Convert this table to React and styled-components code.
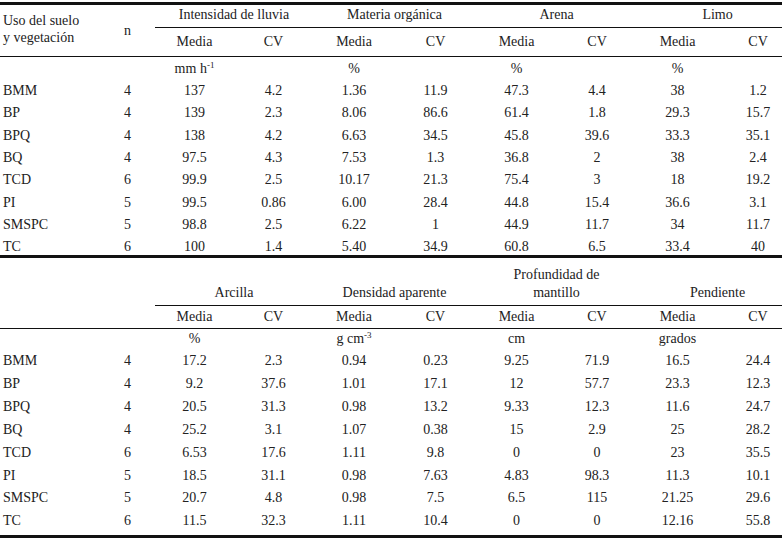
import React from 'react'
import styled, { createGlobalStyle } from 'styled-components'

const GlobalStyle = createGlobalStyle`
  html, body {
    margin: 0;
    padding: 0;
    background: #fff;
  }
  body {
    font-family: "Liberation Serif", "Times New Roman", serif;
    color: #222;
  }
`;

const Sheet = styled.div`
  width: 782px;
  padding-top: 2px;
  font-size: 14px;
`;

const Table = styled.table`
  width: 782px;
  table-layout: fixed;
  border-collapse: collapse;
  border-top: ${p => (p.$first ? '3px solid #111' : 'none')};
  border-bottom: 3px solid #111;
`;

const Col = styled.col`
  width: ${p => p.$w}px;
`;

const HeadRow = styled.tr`
  height: ${p => p.$h}px;
  border-bottom: 1px solid #111;

  &:first-child {
    border-bottom: none;
  }
`;

const Th = styled.th`
  font-weight: normal;
  padding: 0;
  line-height: 16px;
`;

const LabelHead = styled(Th)`
  text-align: left;
  vertical-align: middle;
  padding: 0 0 4px 3px;
  line-height: 17px;
`;

const NHead = styled(Th)`
  text-align: center;
  vertical-align: middle;
`;

const GroupHead = styled(Th)`
  text-align: center;
  vertical-align: bottom;
  line-height: 18px;
  padding: 0 0 3px ${p => (p.$last ? '16px' : '0')};
  border-bottom: 1px solid #111;
`;

const SubHead = styled(Th)`
  text-align: center;
  vertical-align: middle;
  padding-left: ${p => (p.$last ? '16px' : '0')};
`;

const Sup = styled.sup`
  font-size: 9px;
  line-height: 0;
  vertical-align: 5px;
`;

const BodyRow = styled.tr`
  height: ${p => p.$h}px;
`;

const Cell = styled.td`
  padding: ${p => p.$pt}px 0 0 ${p => (p.$label ? '3px' : p.$last ? '16px' : '0')};
  line-height: 16px;
  vertical-align: top;
  text-align: ${p => (p.$label ? 'left' : 'center')};
  white-space: nowrap;
`;

const widths = [100, 55, 79, 79, 82, 81, 81, 80, 81, 64];

const top = {
  groups: ['Intensidad de lluvia', 'Materia orgánica', 'Arena', 'Limo'],
  units: [<>mm h<Sup>-1</Sup></>, '%', '%', '%'],
  rows: [
    ['BMM', '4', '137', '4.2', '1.36', '11.9', '47.3', '4.4', '38', '1.2'],
    ['BP', '4', '139', '2.3', '8.06', '86.6', '61.4', '1.8', '29.3', '15.7'],
    ['BPQ', '4', '138', '4.2', '6.63', '34.5', '45.8', '39.6', '33.3', '35.1'],
    ['BQ', '4', '97.5', '4.3', '7.53', '1.3', '36.8', '2', '38', '2.4'],
    ['TCD', '6', '99.9', '2.5', '10.17', '21.3', '75.4', '3', '18', '19.2'],
    ['PI', '5', '99.5', '0.86', '6.00', '28.4', '44.8', '15.4', '36.6', '3.1'],
    ['SMSPC', '5', '98.8', '2.5', '6.22', '1', '44.9', '11.7', '34', '11.7'],
    ['TC', '6', '100', '1.4', '5.40', '34.9', '60.8', '6.5', '33.4', '40'],
  ],
};

const bottom = {
  groups: ['Arcilla', 'Densidad aparente', <>Profundidad de<br />mantillo</>, 'Pendiente'],
  units: ['%', <>g cm<Sup>-3</Sup></>, 'cm', 'grados'],
  rows: [
    ['BMM', '4', '17.2', '2.3', '0.94', '0.23', '9.25', '71.9', '16.5', '24.4'],
    ['BP', '4', '9.2', '37.6', '1.01', '17.1', '12', '57.7', '23.3', '12.3'],
    ['BPQ', '4', '20.5', '31.3', '0.98', '13.2', '9.33', '12.3', '11.6', '24.7'],
    ['BQ', '4', '25.2', '3.1', '1.07', '0.38', '15', '2.9', '25', '28.2'],
    ['TCD', '6', '6.53', '17.6', '1.11', '9.8', '0', '0', '23', '35.5'],
    ['PI', '5', '18.5', '31.1', '0.98', '7.63', '4.83', '98.3', '11.3', '10.1'],
    ['SMSPC', '5', '20.7', '4.8', '0.98', '7.5', '6.5', '115', '21.25', '29.6'],
    ['TC', '6', '11.5', '32.3', '1.11', '10.4', '0', '0', '12.16', '55.8'],
  ],
};

function DataTable({ data, label, first, h1, h2, rowH, lastH, pt }) {
  return (
    <Table $first={first}>
      <colgroup>
        {widths.map((w, i) => <Col key={i} $w={w} />)}
      </colgroup>
      <thead>
        <HeadRow $h={h1}>
          <LabelHead rowSpan={2}>{label}</LabelHead>
          <NHead rowSpan={2}>{label ? 'n' : ''}</NHead>
          {data.groups.map((g, i) => (
            <GroupHead key={i} colSpan={2} $last={i === 3}>{g}</GroupHead>
          ))}
        </HeadRow>
        <HeadRow $h={h2}>
          {data.groups.map((g, i) => (
            <React.Fragment key={i}>
              <SubHead>Media</SubHead>
              <SubHead $last={i === 3}>CV</SubHead>
            </React.Fragment>
          ))}
        </HeadRow>
      </thead>
      <tbody>
        <BodyRow $h={rowH}>
          <Cell $pt={pt} />
          <Cell $pt={pt} />
          {data.units.map((u, i) => (
            <React.Fragment key={i}>
              <Cell $pt={pt}>{u}</Cell>
              <Cell $pt={pt} />
            </React.Fragment>
          ))}
        </BodyRow>
        {data.rows.map((r, ri) => (
          <BodyRow key={r[0]} $h={ri === data.rows.length - 1 ? lastH : rowH}>
            {r.map((v, ci) => (
              <Cell key={ci} $pt={pt} $label={ci === 0} $last={ci === 9}>{v}</Cell>
            ))}
          </BodyRow>
        ))}
      </tbody>
    </Table>
  );
}

export default function App() {
  return (
    <Sheet>
      <GlobalStyle />
      <DataTable
        data={top}
        first
        label={<>Uso del suelo<br />y vegetación</>}
        h1={24}
        h2={29}
        rowH={22.35}
        lastH={20}
        pt={4}
      />
      <DataTable
        data={bottom}
        h1={47}
        h2={23}
        rowH={22.9}
        lastH={24.8}
        pt={2}
      />
    </Sheet>
  );
}
